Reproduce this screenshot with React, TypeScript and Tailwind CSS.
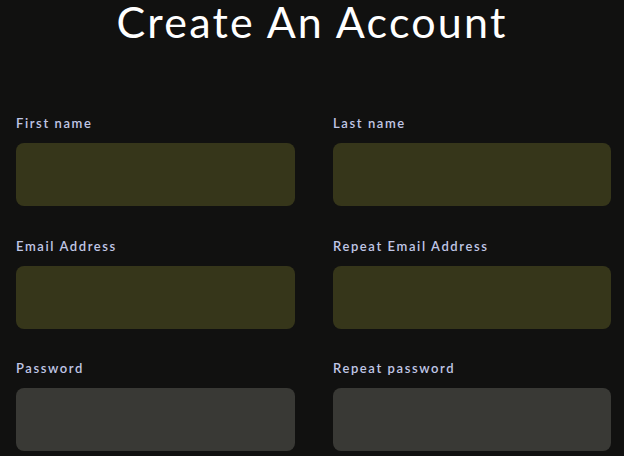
const fields = [
  { id: "first", label: "First name", type: "text", tone: "olive" },
  { id: "last", label: "Last name", type: "text", tone: "olive" },
  { id: "email", label: "Email Address", type: "email", tone: "olive" },
  { id: "email2", label: "Repeat Email Address", type: "email", tone: "olive" },
  { id: "password", label: "Password", type: "password", tone: "gray" },
  { id: "password2", label: "Repeat password", type: "password", tone: "gray" },
]

export default function App() {
  return (
    <div
      className="min-h-screen bg-[#111110] text-white"
      style={{ fontFamily: "Lato, 'Open Sans', sans-serif" }}
    >
      <h1 className="text-center text-[43px] leading-[44px] font-normal tracking-[2.2px] text-white">
        Create An Account
      </h1>
      <form className="mt-[71px] grid grid-cols-[279px_278px] gap-x-[38px] gap-y-[31.5px] pl-4">
        {fields.map((field) => (
          <div key={field.id} className="flex flex-col">
            <label
              htmlFor={field.id}
              className="mb-[12px] text-[13px] leading-4 font-semibold tracking-[1.6px] text-[#c0c7e6]"
            >
              {field.label}
            </label>
            <input
              id={field.id}
              type={field.type}
              className={[
                "h-[63px] w-full rounded-lg px-3 text-white outline-none",
                field.tone === "olive" ? "bg-[#36361a]" : "bg-[#393935]",
              ].join(" ")}
            />
          </div>
        ))}
      </form>
    </div>
  )
}
